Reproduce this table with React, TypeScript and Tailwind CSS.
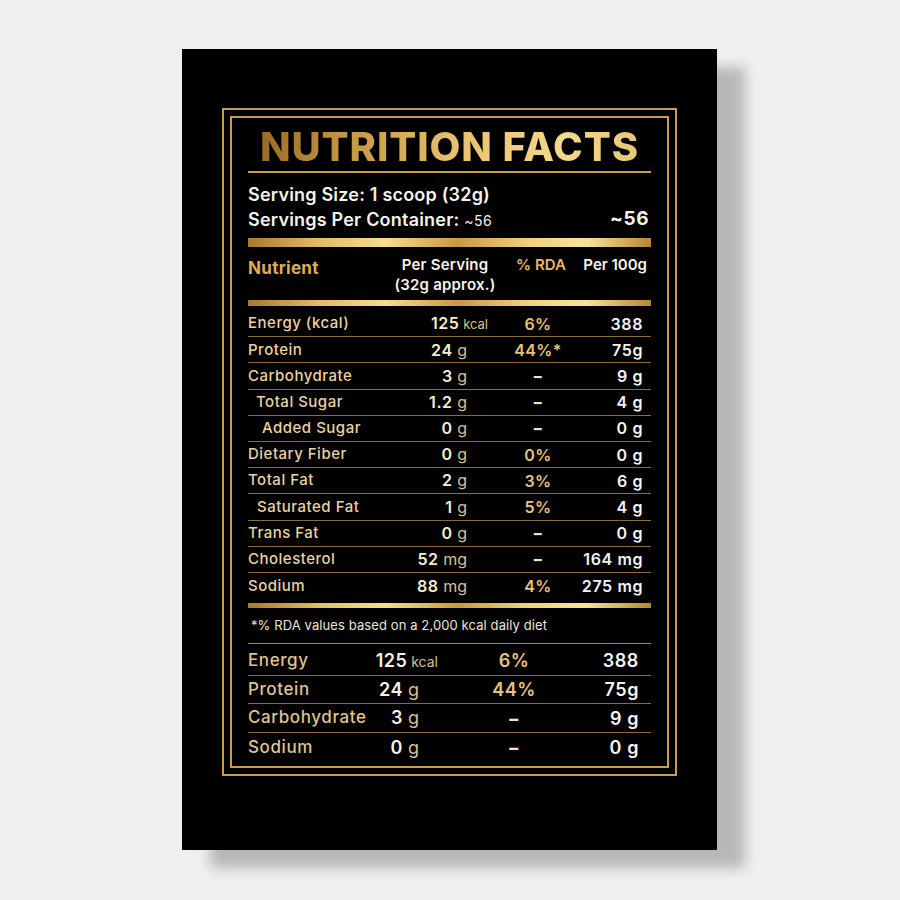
type Row = {
  label: string;
  indent?: string;
  num: string;
  unit: string;
  rda: string;
  per100: string;
  kcal?: boolean;
};

const mainRows: Row[] = [
  { label: "Energy (kcal)", num: "125", unit: "kcal", rda: "6%", per100: "388", kcal: true },
  { label: "Protein", num: "24", unit: "g", rda: "44%*", per100: "75g" },
  { label: "Carbohydrate", num: "3", unit: "g", rda: "–", per100: "9 g" },
  { label: "Total Sugar", indent: "pl-[8px]", num: "1.2", unit: "g", rda: "–", per100: "4 g" },
  { label: "Added Sugar", indent: "pl-[14px]", num: "0", unit: "g", rda: "–", per100: "0 g" },
  { label: "Dietary Fiber", num: "0", unit: "g", rda: "0%", per100: "0 g" },
  { label: "Total Fat", num: "2", unit: "g", rda: "3%", per100: "6 g" },
  { label: "Saturated Fat", indent: "pl-[9px]", num: "1", unit: "g", rda: "5%", per100: "4 g" },
  { label: "Trans Fat", num: "0", unit: "g", rda: "–", per100: "0 g" },
  { label: "Cholesterol", num: "52", unit: "mg", rda: "–", per100: "164 mg" },
  { label: "Sodium", num: "88", unit: "mg", rda: "4%", per100: "275 mg" },
];

const summaryRows: Row[] = [
  { label: "Energy", num: "125", unit: "kcal", rda: "6%", per100: "388", kcal: true },
  { label: "Protein", num: "24", unit: "g", rda: "44%", per100: "75g" },
  { label: "Carbohydrate", num: "3", unit: "g", rda: "–", per100: "9 g" },
  { label: "Sodium", num: "0", unit: "g", rda: "–", per100: "0 g" },
];

const goldBar =
  "bg-[linear-gradient(90deg,#a9782b_0%,#e3bd65_18%,#f7dd8e_34%,#c9993f_52%,#f1d281_70%,#f8e29a_84%,#b5862f_100%)]";

export default function App() {
  return (
    <div
      className="w-[900px] h-[900px] bg-[#efefef] pt-[49px] pl-[182px]"
      style={{ fontFamily: "Inter, 'Noto Sans', sans-serif" }}
    >
      <div className="w-[535px] h-[801px] bg-black pt-[59px] px-[40px] shadow-[28px_18px_12px_rgba(0,0,0,0.23)]">
        <div className="border-2 border-[#c99c4c] p-[6px]">
          <div className="border-2 border-[#c99c4c] px-[16px] h-[652px] flex flex-col">
            {/* title */}
            <div className="h-[53px] pt-[5px] flex items-center justify-center">
              <h1 className="text-[40px] leading-none font-extrabold tracking-[0.9px] bg-[linear-gradient(90deg,#9a6b25_0%,#c99a45_25%,#e9c572_55%,#f3d88d_80%,#e8c676_100%)] bg-clip-text text-transparent">
                NUTRITION FACTS
              </h1>
            </div>
            <div className="h-[2px] bg-[#c9a050]" />

            {/* serving */}
            <div className="h-[65px] pt-[9px] text-[#f6f2e8] font-semibold text-[18px] tracking-[0.2px]">
              <div className="h-[25px] flex items-center">Serving Size: 1 scoop (32g)</div>
              <div className="h-[25px] flex items-center justify-between">
                <span>
                  Servings Per Container:{" "}
                  <span className="text-[14px] font-normal tracking-[0.5px]">~56</span>
                </span>
                <span className="font-bold text-[19px] tracking-[0.5px] pr-[2px]">~56</span>
              </div>
            </div>
            <div className={`h-[9px] ${goldBar}`} />

            {/* header */}
            <div className="h-[53px] pt-[8px] flex items-start">
              <div className="flex-1 text-[17px] font-bold text-[#dcae52] leading-[20px] pt-[3px] tracking-[0.3px]">
                Nutrient
              </div>
              <div className="w-[110px] text-center text-[15px] font-semibold text-[#f6f2e8] leading-[20px] tracking-[0.2px]">
                Per Serving
                <br />
                (32g approx.)
              </div>
              <div className="w-[82px] text-center text-[15px] font-semibold text-[#e4b960] leading-[20px]">
                % RDA
              </div>
              <div className="w-[69px] text-right text-[15px] font-semibold text-[#f6f2e8] leading-[20px] pr-[4px]">
                Per 100g
              </div>
            </div>
            <div className={`h-[6px] ${goldBar}`} />

            {/* rows */}
            <div className="h-[297px] pt-[5px]">
              {mainRows.map((r, i) => (
                <div
                  key={r.label}
                  className={`h-[26.2px] grid grid-cols-[152px_67px_101px_75px] items-center text-[15px] ${
                    i < mainRows.length - 1 ? "border-b border-[#8a6d3c]" : ""
                  }`}
                >
                  <div className={`text-[#e8d3a2] font-medium tracking-[0.5px] whitespace-nowrap ${r.indent ?? ""}`}>
                    {r.label}
                  </div>
                  <div className="text-right whitespace-nowrap">
                    <span className={`inline-block ${r.kcal ? "mr-[-21px]" : ""}`}>
                      <span className="text-[#f5ecd5] font-semibold text-[16px] tracking-[0.6px]">{r.num}</span>
                      <span className={`text-[#d9c08e] ${r.kcal ? "text-[13px]" : "text-[16px]"}`}> {r.unit}</span>
                    </span>
                  </div>
                  <div className="pl-[41px] text-center text-[#e8c37a] font-semibold text-[16px] tracking-[0.4px]">
                    {r.rda === "–" ? <span className="font-extrabold text-[#f0e2c2]">–</span> : r.rda}
                  </div>
                  <div className="text-right text-[#f4f4f4] font-semibold text-[16px] tracking-[0.6px] whitespace-nowrap">
                    {r.per100}
                  </div>
                </div>
              ))}
            </div>
            <div className={`h-[5px] ${goldBar}`} />

            {/* footnote */}
            <div className="h-[35px] flex items-center pl-[3px] text-[13px] text-[#ece6d8] tracking-[0.1px]">
              *% RDA values based on a 2,000 kcal daily diet
            </div>
            <div className="h-px bg-[#b08a44]" />

            {/* summary */}
            <div className="pt-[3px]">
              {summaryRows.map((r, i) => (
                <div
                  key={r.label}
                  className={`h-[28.7px] grid grid-cols-[112px_59px_160px_60px] items-center text-[17px] ${
                    i < summaryRows.length - 1 ? "border-b border-[#8a6d3c]" : ""
                  }`}
                >
                  <div className="text-[#dfc48e] font-medium tracking-[0.6px] whitespace-nowrap">{r.label}</div>
                  <div className="text-right whitespace-nowrap">
                    <span className={`inline-block ${r.kcal ? "mr-[-19px]" : ""}`}>
                      <span className="text-[#f7f1e2] font-semibold text-[18px] tracking-[0.5px]">{r.num}</span>
                      <span className={`text-[#d9c08e] ${r.kcal ? "text-[14px]" : "text-[18px]"}`}> {r.unit}</span>
                    </span>
                  </div>
                  <div className="pl-[30px] text-center text-[#e8c37a] font-semibold text-[18px] tracking-[0.5px]">
                    {r.rda === "–" ? <span className="font-extrabold text-[#f0e2c2]">–</span> : r.rda}
                  </div>
                  <div className="text-right text-[#f4f4f4] font-semibold text-[18px] tracking-[0.6px] whitespace-nowrap">
                    {r.per100}
                  </div>
                </div>
              ))}
            </div>
          </div>
        </div>
      </div>
    </div>
  );
}
